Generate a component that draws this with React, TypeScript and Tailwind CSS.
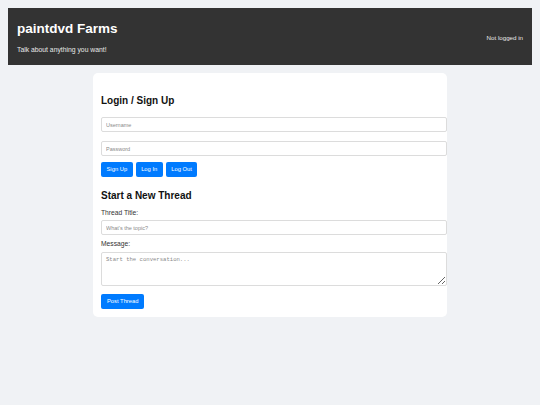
import React, { useState } from 'react';

const inputCls =
  'block w-[346px] h-[15px] px-[4px] border border-[#dcdcdc] rounded-[2px] bg-white text-[5.5px] text-[#333] placeholder:text-[#8a8a8a] outline-none';

const btnCls =
  'h-[15px] px-[5.5px] rounded-[2px] bg-[#007bff] text-white text-[5.8px] leading-none';

export default function App() {
  const [username, setUsername] = useState('');
  const [password, setPassword] = useState('');
  const [title, setTitle] = useState('');
  const [message, setMessage] = useState('');

  return (
    <div className="min-h-screen bg-[#f0f2f5] p-[8px] font-['Liberation_Sans',Arial,sans-serif]">
      {/* Шапка */}
      <header className="flex items-center justify-between bg-[#333333] text-white pl-[9px] pr-[9px] pt-[13px] pb-[11px]">
        <div>
          <h1 className="text-[13.5px] leading-[16px] font-bold">paintdvd Farms</h1>
          <p className="mt-[9px] text-[6.8px] leading-[8px] text-[#e8e8e8]">Talk about anything you want!</p>
        </div>
        <div className="text-[6.2px] leading-[8px] text-[#e8e8e8]">Not logged in</div>
      </header>

      {/* Карточка */}
      <main className="mx-auto mt-[8px] w-[354px] bg-white rounded-[5px] pl-[8px] pt-[22px] pb-[8px]">
        <h2 className="text-[10px] leading-[12px] font-bold text-[#111]">Login / Sign Up</h2>
        <input
          className={`${inputCls} mt-[10px]`}
          placeholder="Username"
          value={username}
          onChange={(e) => { setUsername(e.target.value); }}
        />
        <input
          type="password"
          className={`${inputCls} mt-[9px]`}
          placeholder="Password"
          value={password}
          onChange={(e) => { setPassword(e.target.value); }}
        />
        <div className="flex gap-[3px] mt-[6px]">
          <button className={btnCls}>Sign Up</button>
          <button className={btnCls}>Log In</button>
          <button className={btnCls}>Log Out</button>
        </div>

        <h2 className="mt-[13px] text-[10px] leading-[12px] font-bold text-[#111]">Start a New Thread</h2>
        <label className="block mt-[7px] text-[6.7px] leading-[8px] text-[#333]">Thread Title:</label>
        <input
          className={`${inputCls} mt-[3px]`}
          placeholder="What's the topic?"
          value={title}
          onChange={(e) => { setTitle(e.target.value); }}
        />
        <label className="block mt-[5px] text-[6.7px] leading-[8px] text-[#333]">Message:</label>
        <textarea
          className="block mt-[4px] w-[346px] h-[34px] px-[4px] py-[3px] border border-[#dcdcdc] rounded-[2px] text-[5.6px] leading-[7px] font-['Liberation_Mono',monospace] text-[#333] placeholder:text-[#8a8a8a] outline-none"
          placeholder="Start the conversation..."
          value={message}
          onChange={(e) => { setMessage(e.target.value); }}
        />
        <button className={`${btnCls} block mt-[8px] px-[6px]`}>Post Thread</button>
      </main>
    </div>
  );
}
